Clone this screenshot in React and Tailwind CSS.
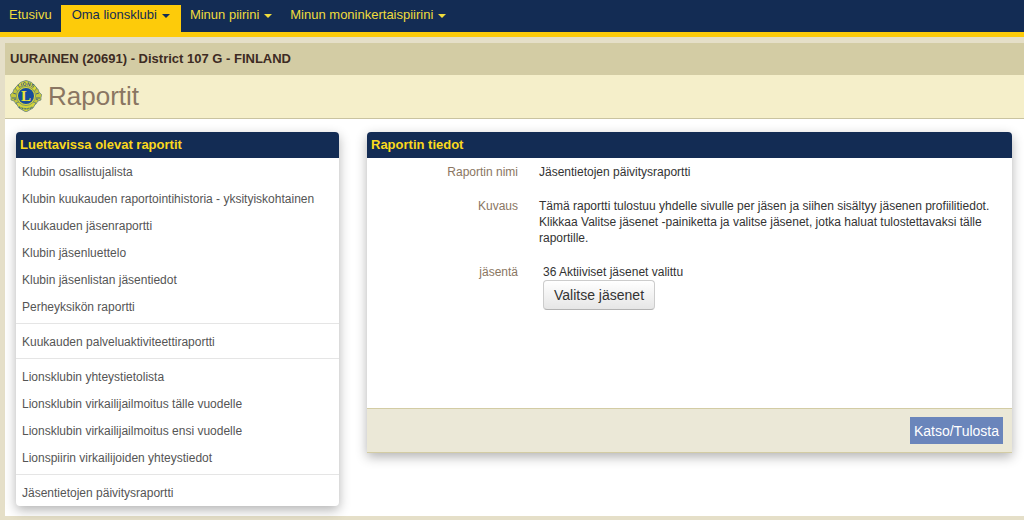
const NAV_ITEMS = [
  { label: 'Etusivu' },
  { label: 'Oma lionsklubi', menu: true, active: true },
  { label: 'Minun piirini', menu: true },
  { label: 'Minun moninkertaispiirini', menu: true },
];

const REPORT_GROUPS = [
  [
    'Klubin osallistujalista',
    'Klubin kuukauden raportointihistoria - yksityiskohtainen',
    'Kuukauden jäsenraportti',
    'Klubin jäsenluettelo',
    'Klubin jäsenlistan jäsentiedot',
    'Perheyksikön raportti',
  ],
  ['Kuukauden palveluaktiviteettiraportti'],
  [
    'Lionsklubin yhteystietolista',
    'Lionsklubin virkailijailmoitus tälle vuodelle',
    'Lionsklubin virkailijailmoitus ensi vuodelle',
    'Lionspiirin virkailijoiden yhteystiedot',
  ],
  ['Jäsentietojen päivitysraportti'],
];

export default function App() {
  return (
    <div className="min-h-screen flex flex-col bg-[#e5dfc8] font-['Liberation_Sans',Arial,sans-serif] text-[13px] leading-4 text-[#333]">
      <NavBar />
      <main className="flex-1 flex flex-col mt-1.5 ml-[5px] mb-1 bg-white">
        <div className="h-8 px-[5px] flex items-center bg-[#d3cca4] font-bold text-[#3d2b23]">
          UURAINEN (20691) - District 107 G - FINLAND
        </div>
        <div className="h-11 px-[5px] pb-0.5 flex items-center gap-1.5 bg-[#f5efca] border-b border-[#c9c3a0]">
          <LionsLogo />
          <h1 className="text-[26px] leading-8 text-[#8a7662]">Raportit</h1>
        </div>
        <div className="flex items-start gap-7 pt-[13px] pl-[11px] pr-3 pb-2">
          <ReportList />
          <ReportDetails />
        </div>
      </main>
    </div>
  );
}

function NavBar() {
  return (
    <nav className="h-[37px] flex items-end bg-[#132c54] border-b-[5px] border-[#fdcb0a]">
      {NAV_ITEMS.map(item => (
        <a
          key={item.label}
          href="#"
          className={`h-[27px] flex items-center pb-[7px] gap-[5px] ${item.active ? 'bg-[#fdcb0a] text-[#132c54] px-[11px]' : 'text-[#f0dc3c] px-[9px]'}`}
        >
          {item.label}
          {item.menu && <Caret />}
        </a>
      ))}
    </nav>
  );
}

function Caret() {
  return (
    <svg viewBox="0 0 8 4" className="w-2 h-1 mt-0.5" fill="currentColor" aria-hidden="true">
      <path d="M0 0h8L4 4z" />
    </svg>
  );
}

function PanelTitle({ children }) {
  return <h2 className="h-[26px] px-1 flex items-center rounded-t-[4px] bg-[#132c54] font-bold text-[#fbd91c]">{children}</h2>;
}

function ReportList() {
  return (
    <section className="w-[323px] shrink-0 rounded-[4px] bg-white shadow-[0_4px_12px_rgba(0,0,0,0.3)]">
      <PanelTitle>Luettavissa olevat raportit</PanelTitle>
      {REPORT_GROUPS.map((group, i) => (
        <ul key={i} className="pt-1 pb-[3px] border-t border-[#e5e5e5] first-of-type:pt-0 first-of-type:border-t-0 last:pb-0">
          {group.map(name => (
            <li key={name}>
              <a href="#" className="h-[27px] px-1.5 flex items-center whitespace-nowrap text-[12px] text-[#555]">{name}</a>
            </li>
          ))}
        </ul>
      ))}
    </section>
  );
}

function ReportDetails() {
  return (
    <section className="flex-1 min-w-0 rounded-t-[4px] bg-white shadow-[0_4px_12px_rgba(0,0,0,0.3)]">
      <PanelTitle>Raportin tiedot</PanelTitle>
      <dl className="min-h-[250px] pt-1.5 pr-1 grid grid-cols-[151px_1fr] gap-x-[21px] gap-y-[18px] content-start text-[12px]">
        <Term>Raportin nimi</Term>
        <dd>Jäsentietojen päivitysraportti</dd>
        <Term>Kuvaus</Term>
        <dd>
          Tämä raportti tulostuu yhdelle sivulle per jäsen ja siihen sisältyy jäsenen profiilitiedot. Klikkaa Valitse
          jäsenet -painiketta ja valitse jäsenet, jotka haluat tulostettavaksi tälle raportille.
        </dd>
        <Term>jäsentä</Term>
        <dd className="pl-1">
          <p>36 Aktiiviset jäsenet valittu</p>
          <button
            type="button"
            className="h-[30px] px-2.5 rounded-[4px] border border-[#ccc] border-b-[#b3b3b3] bg-linear-to-b from-white to-[#e6e6e6] text-[14px] leading-5"
          >
            Valitse jäsenet
          </button>
        </dd>
      </dl>
      <div className="h-[45px] pr-[9px] flex items-center justify-end bg-[#ebe8d7] border-y border-[#d3cca4]">
        <button type="button" className="h-[27px] px-1 bg-[#6a85bb] text-[14px] text-white">
          Katso/Tulosta
        </button>
      </div>
    </section>
  );
}

function Term({ children }) {
  return <dt className="text-right text-[#8a7662]">{children}</dt>;
}

function LionsLogo() {
  return (
    <svg viewBox="0 0 32 32" className="w-8 h-8" role="img" aria-label="Lions International">
      {/* lion heads facing outwards */}
      <path d="M8 7 4 9 3 12 0 15l1 2 0 3 3 1 2 3 4 1V7z" fill="#c3c63c" stroke="#4a6f86" strokeWidth=".6" />
      <path d="m24 7 4 2 1 3 3 3-1 2 0 3-3 1-2 3-4 1V7z" fill="#c3c63c" stroke="#4a6f86" strokeWidth=".6" />
      <path d="m3 13 3 1M2 18l4 0M4 20l2-1M29 13l-3 1M30 18l-4 0M28 20l-2-1" stroke="#29508a" strokeWidth=".8" />
      {/* upper and lower name bands */}
      <path d="M5 8Q16-7 27 8l-4 5H9z" fill="#d9d636" stroke="#4a6f86" strokeWidth=".7" />
      <path d="M6 23q10-5 20 0l-3 5-7 4-7-4z" fill="#d2d33a" stroke="#4a6f86" strokeWidth=".7" />
      <path d="M9 27q7 3.500 14 0" fill="none" stroke="#3d6a7e" strokeWidth="1.500" strokeDasharray="1 .6" />
      <circle cx="16" cy="16" r="9.500" fill="#dedb38" stroke="#4a6f86" strokeWidth=".6" />
      <circle cx="16" cy="16" r="8" fill="#174c9b" />
      <path id="lions-arc" d="M7 9.500Q16 2 25 9.500" fill="none" />
      <text fontSize="5" fontWeight="bold" fill="#29508a" textAnchor="middle">
        <textPath href="#lions-arc" startOffset="50%">LIONS</textPath>
      </text>
      <text x="16" y="21" textAnchor="middle" fontSize="15" fontWeight="bold" fontFamily="Liberation Serif, serif" fill="#ece33a">L</text>
    </svg>
  );
}
